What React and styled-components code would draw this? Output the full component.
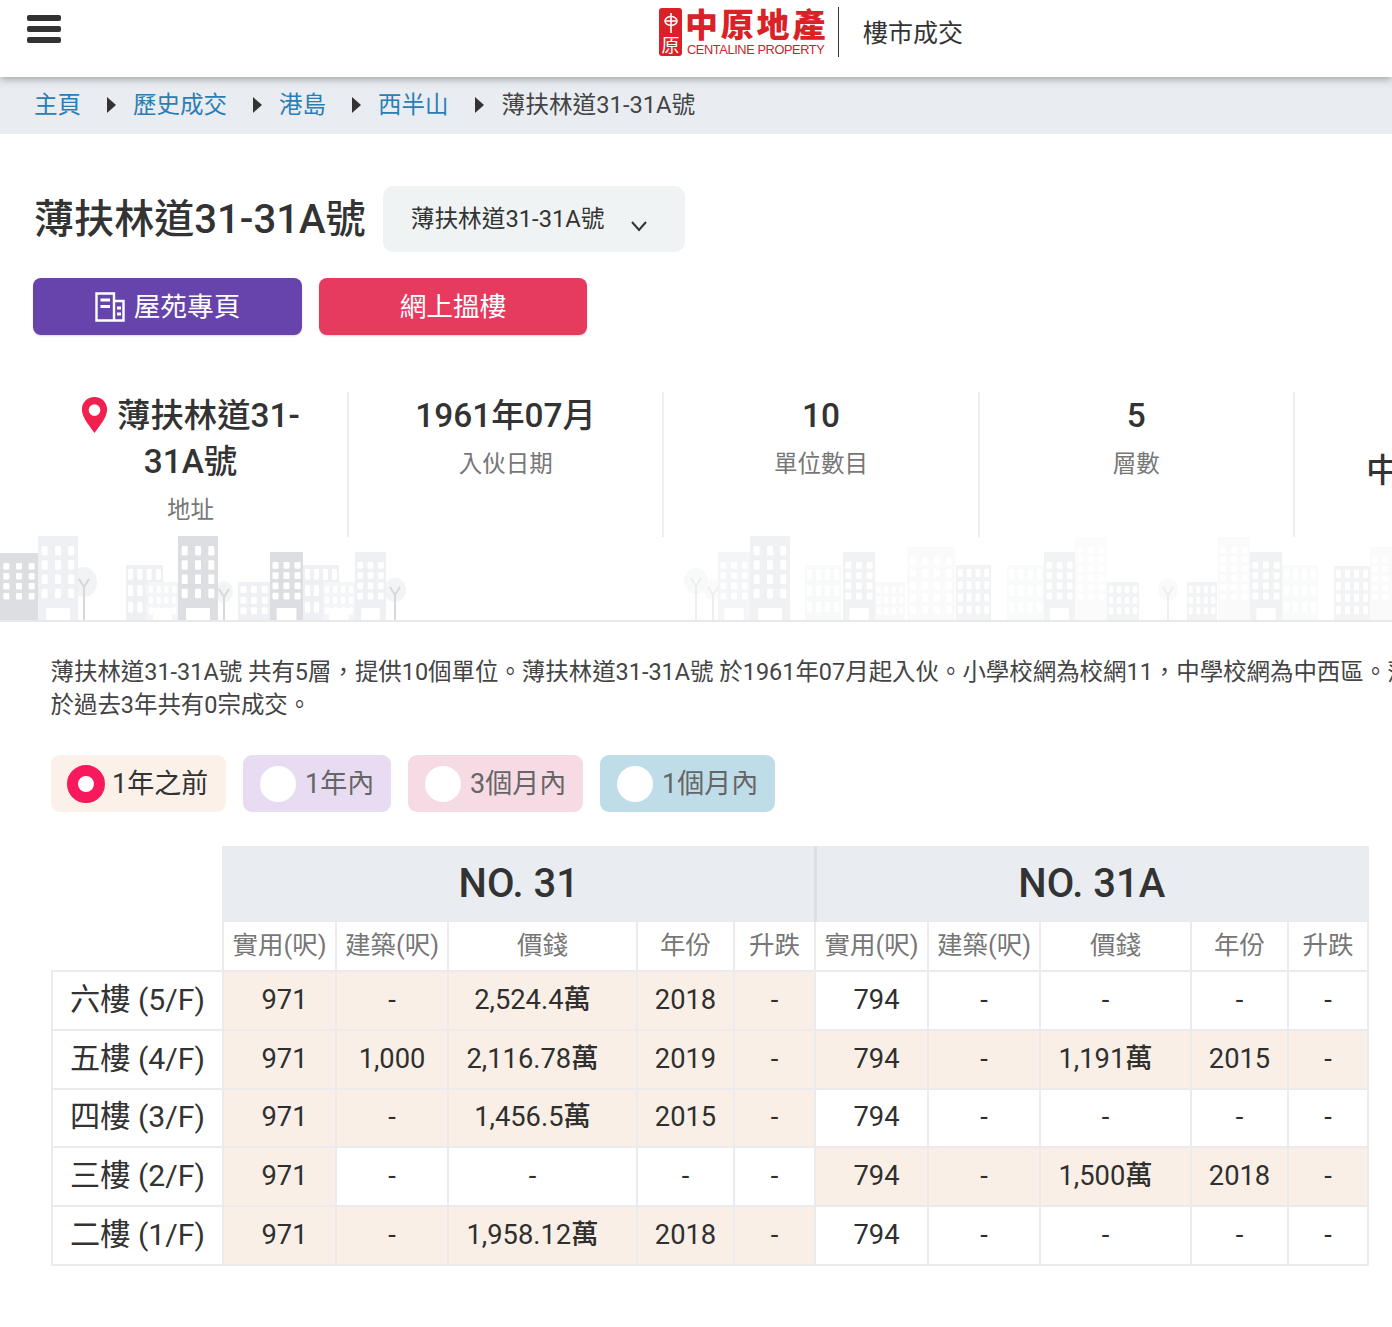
import React from "react"
import styled, { createGlobalStyle } from "styled-components"

const GlobalStyle = createGlobalStyle`
    html, body {
        margin: 0;
        padding: 0;
        background: #fff;
        overflow-x: hidden;
    }
    body {
        font-family: Roboto, "Noto Sans CJK TC", sans-serif;
        color: #333;
    }
`

const Page = styled.div`
    width: 1392px;
    height: 1327px;
    overflow: hidden;
    background: #fff;
`

const Header = styled.header`
    position: relative;
    z-index: 2;
    height: 77px;
    background: #fff;
    box-shadow: 0 2px 8px rgba(60, 60, 70, 0.45);
    display: flex;
    align-items: flex-start;
`

const Burger = styled.div`
    width: 34px;
    margin: 15px 0 0 27px;
    display: flex;
    flex-direction: column;
    gap: 5px;
    span {
        height: 6px;
        border-radius: 2px;
        background: #333;
    }
`

const LogoArea = styled.div`
    display: flex;
    margin: 7px 0 0 598px;
`

const Seal = styled.div`
    width: 23px;
    height: 48px;
    margin-top: 1px;
    border-radius: 3px;
    background: #da2128;
    color: #fff;
    display: flex;
    flex-direction: column;
    align-items: center;
    font-size: 18px;
    line-height: 20px;
    overflow: hidden;
    svg { margin: 5px 0 3px; }
`

const LogoText = styled.div`
    width: 139px;
    margin-left: 5px;
    display: flex;
    flex-direction: column;
`

const LogoCn = styled.div`
    margin: 2px 0 0 -2px;
    font-weight: 900;
    font-size: 33px;
    line-height: 33px;
    letter-spacing: 2.8px;
    color: #da2128;
    white-space: nowrap;
`

const LogoEn = styled.div`
    font-family: "Liberation Sans", sans-serif;
    font-size: 12.8px;
    line-height: 16px;
    letter-spacing: -0.4px;
    color: #c8242c;
    white-space: nowrap;
`

const LogoRule = styled.div`
    width: 1px;
    height: 50px;
    margin-left: 12px;
    background: #333;
`

const SiteName = styled.div`
    margin: 9px 0 0 24px;
    font-size: 25px;
    line-height: 36px;
    color: #333;
    white-space: nowrap;
`

const Crumbs = styled.nav`
    height: 57px;
    box-sizing: border-box;
    padding: 0 0 2px 34px;
    background: #e9edf2;
    display: flex;
    align-items: center;
    font-size: 23.5px;
    line-height: 30px;
    white-space: nowrap;
`

const Crumb = styled.span`
    color: ${props => (props.$current ? "#444" : "#2a7eb5")};
    font-size: ${props => (props.$current ? 23.7 : 23.5)}px;
    margin-left: ${props => (props.$current ? 1 : 0)}px;
`

const CrumbArrow = styled.i`
    width: 0;
    height: 0;
    margin: 0 17px 0 26px;
    border-left: 9.250px solid #333;
    border-top: 8px solid transparent;
    border-bottom: 8px solid transparent;
`

const TitleRow = styled.div`
    margin-top: 52px;
    padding-left: 34px;
    display: flex;
    align-items: center;
`

const Title = styled.h1`
    margin: 0;
    height: 66px;
    font-size: 40.1px;
    line-height: 68px;
    font-weight: 500;
    color: #333;
    white-space: nowrap;
`

const Select = styled.div`
    width: 302px;
    height: 66px;
    margin-left: 17px;
    padding: 0 37px 0 28px;
    box-sizing: border-box;
    border-radius: 10px;
    background: #f0f3f3;
    display: flex;
    align-items: center;
    justify-content: space-between;
    font-size: 23.7px;
    line-height: 30px;
    white-space: nowrap;
    svg { margin-top: 14px; }
`

const ButtonRow = styled.div`
    margin-top: 26px;
    padding-left: 33px;
    display: flex;
    gap: 17px;
`

const Button = styled.div`
    width: ${props => props.$width}px;
    height: 57px;
    border-radius: 8px;
    background: ${props => props.$bg};
    box-shadow: 0 1px 2px rgba(0, 0, 0, 0.15);
    color: #fff;
    display: flex;
    align-items: center;
    justify-content: center;
    gap: 9px;
    font-size: 26.7px;
    line-height: 34px;
`

const InfoRow = styled.div`
    margin-top: 57px;
    width: 1600px;
    display: flex;
    height: 145px;
`

const InfoCell = styled.div`
    flex: none;
    width: ${props => props.$width || 315.3}px;
    box-sizing: border-box;
    border-right: 2px solid #eceef0;
    display: flex;
    flex-direction: column;
    align-items: center;
    padding: 1px 0 0 ${props => props.$indent || 0}px;
    text-align: center;
    &:last-child { border-right: 0; }
`

const LastCell = styled(InfoCell)`
    align-items: flex-start;
    padding: 56px 0 0 71px;
`

const InfoValue = styled.div`
    font-size: 33.4px;
    line-height: 46px;
    font-weight: 500;
    color: #333;
    white-space: nowrap;
`

const InfoLabel = styled.div`
    margin-top: ${props => props.$top || 3}px;
    font-size: 23.5px;
    line-height: 44px;
    color: #777;
`

const Pin = styled.svg`
    margin: 0 9px -8px 0;
`

const Skyline = styled.svg`
    display: block;
    margin-top: -1px;
    border-bottom: 2px solid #e9e9ec;
`

const Summary = styled.p`
    margin: 34px 0 0;
    padding-left: 50.500px;
    font-size: 23.45px;
    line-height: 33px;
    color: #444;
    white-space: nowrap;
`

const Filters = styled.div`
    margin-top: 33px;
    padding-left: 51px;
    display: flex;
    gap: 17px;
`

const Filter = styled.div`
    width: ${props => props.$width}px;
    height: 57px;
    padding-left: ${props => (props.$on ? 16 : 17)}px;
    box-sizing: border-box;
    border-radius: 9px;
    background: ${props => props.$bg};
    color: ${props => (props.$on ? "#333" : "#666")};
    display: flex;
    align-items: center;
    gap: ${props => (props.$on ? 7 : 9)}px;
    font-size: 27px;
    line-height: 34px;
    white-space: nowrap;
`

const Radio = styled.span`
    flex: none;
    width: ${props => (props.$on ? 38 : 36)}px;
    height: ${props => (props.$on ? 38 : 36)}px;
    box-sizing: border-box;
    border-radius: 50%;
    background: #fff;
    border: ${props => (props.$on ? "11px solid #f7195b" : "0")};
`

const TableWrap = styled.div`
    margin: 34px 0 0 51px;
`

const Table = styled.table`
    width: 1318px;
    table-layout: fixed;
    border-collapse: collapse;
    color: #333;
    td, th {
        padding: 0;
        box-sizing: border-box;
        text-align: center;
        border: 2px solid #ebebed;
        white-space: nowrap;
        line-height: 36px;
    }
`

const BlockHead = styled.th`
    height: 74px;
    background: #e9edf2;
    font-size: 40px;
    font-weight: 500;
    &:nth-child(3) { border-left: 3px solid #dce0e5; }
`

const ColHead = styled.th`
    height: 50px;
    font-size: 25.5px;
    font-weight: 400;
    color: #777;
    && { padding-bottom: 2px; }
`

const Blank = styled.th`
    border: 0 !important;
    background: #fff;
`

const FloorCell = styled.td`
    font-size: 30.2px;
    font-weight: 400;
    && { padding-bottom: ${props => (props.$up ? 2 : 0)}px; }
`

const ValueCell = styled.td`
    height: 58.8px;
    font-size: 27.3px;
    font-weight: 450;
    color: #2f2f2f;
    background: ${props => (props.$hit ? "#f9efe6" : "#fff")};
    && {
        padding-left: ${props => (props.$col === 0 ? 10 : 0)}px;
        padding-right: ${props => (props.$col === 2 ? 20 : 0)}px;
        padding-bottom: ${props => (props.$up ? 2 : 0)}px;
    }
`

const widths = [171, 113, 112, 189, 97, 81, 113, 112, 151, 97, 80]

const rows = [
    ["六樓 (5/F)", ["971", "-", "2,524.4萬", "2018", "-"], ["794", "-", "-", "-", "-"]],
    ["五樓 (4/F)", ["971", "1,000", "2,116.78萬", "2019", "-"], ["794", "-", "1,191萬", "2015", "-"]],
    ["四樓 (3/F)", ["971", "-", "1,456.5萬", "2015", "-"], ["794", "-", "-", "-", "-"]],
    ["三樓 (2/F)", ["971", "-", "-", "-", "-"], ["794", "-", "1,500萬", "2018", "-"]],
    ["二樓 (1/F)", ["971", "-", "1,958.12萬", "2018", "-"], ["794", "-", "-", "-", "-"]],
]

const columns = ["實用(呎)", "建築(呎)", "價錢", "年份", "升跌"]

// x, top, width, windows across, windows down, fill, door
const buildings = [
    [38, 536, 40, 3, 4, "#eef0f3", 1],
    [0, 553, 38, 3, 4, "#dcdee2", 0],
    [126, 565, 37, 4, 3, "#eef0f3", 0],
    [147, 582, 31, 4, 3, "#f4f5f7", 1],
    [178, 536, 40, 3, 4, "#dcdee2", 1],
    [238, 582, 32, 3, 3, "#eef0f3", 0],
    [303, 565, 36, 4, 3, "#eef0f3", 0],
    [323, 582, 32, 4, 3, "#f4f5f7", 1],
    [270, 552, 33, 3, 4, "#dcdee2", 1],
    [355, 552, 31, 3, 4, "#eef0f3", 1],
    [718, 552, 32, 3, 4, "#f3f5f6", 1],
    [750, 536, 40, 3, 4, "#eff1f2", 1],
    [805, 565, 36, 4, 3, "#f8f9f9", 0],
    [843, 552, 32, 3, 4, "#f1f2f3", 1],
    [875, 582, 30, 4, 3, "#f9f9fa", 0],
    [907, 547, 48, 4, 5, "#fafafb", 0],
    [956, 565, 35, 4, 4, "#f2f3f4", 0],
    [1007, 565, 37, 4, 3, "#f9fafa", 0],
    [1044, 552, 31, 3, 4, "#f2f3f4", 1],
    [1075, 537, 32, 3, 6, "#fbfbfc", 0],
    [1107, 582, 32, 4, 3, "#f2f3f4", 0],
    [1187, 582, 30, 4, 3, "#f2f3f4", 0],
    [1218, 537, 32, 3, 6, "#fafafb", 0],
    [1250, 552, 32, 3, 4, "#f1f2f3", 1],
    [1282, 565, 36, 4, 3, "#f9fafa", 0],
    [1334, 566, 36, 4, 4, "#f2f3f4", 0],
    [1370, 547, 30, 3, 5, "#fafafb", 0],
]

// x, crown y, crown rx, crown ry, trunk colour, crown colour
const trees = [
    [84, 582, 13, 15, "#d6d8dc", "#f1f3f4"],
    [224, 592, 9, 11, "#d6d8dc", "#f3f4f6"],
    [395, 590, 11, 12, "#d6d8dc", "#f3f4f6"],
    [696, 581, 12, 13, "#eceeef", "#f8f9f9"],
    [713, 590, 9, 10, "#eceeef", "#fafafa"],
    [1168, 590, 10, 11, "#eceeef", "#fafafa"],
]

function Building({ spec }) {
    const [x, top, w, across, down, fill, door] = spec
    const bottom = 620
    const tall = top < 560
    const first = top + (tall ? 10 : 4)
    const limit = tall && across === 3 ? 603 : 618
    const pitch = (limit - first) / down
    const pitchX = w / across
    const winW = Math.min(pitchX * 0.55, 6)
    const wins = []
    for (let r = 0; r < down; r++) {
        for (let c = 0; c < across; c++) {
            wins.push(
                <rect
                    key={r + "-" + c}
                    x={x + pitchX * c + (pitchX - winW) / 2}
                    y={first + pitch * r}
                    width={winW}
                    height={pitch * 0.66}
                    rx="1"
                    fill="#fff"
                />
            )
        }
    }
    return (
        <g>
            <rect x={x} y={top} width={w} height={bottom - top} fill={fill} />
            {wins}
            {door ? <rect x={x + w * 0.2} y={608} width={w * 0.6} height={12} fill="#fff" /> : null}
        </g>
    )
}

function Tree({ spec }) {
    const [x, cy, rx, ry, trunk, crown] = spec
    const fork = cy + 5
    return (
        <g>
            <ellipse cx={x} cy={cy} rx={rx} ry={ry} fill={crown} />
            <path d={`M${x} 620V${fork}M${x} ${fork}l-5 -8M${x} ${fork}l5 -8`} stroke={trunk} strokeWidth="2" fill="none" />
        </g>
    )
}

function BuildingIcon() {
    return (
        <svg width="30" height="30" viewBox="0 0 30 30" fill="none" stroke="#fff" strokeWidth="2.400">
            <path d="M1.500 28.500V1.500h17.500v27zM19 9h9.500v19.500H1.500" />
            <path d="M5.500 8h9.500M5.500 14.500h9.500M22 16h4M22 22h4" strokeWidth="3.200" />
        </svg>
    )
}

function App() {
    return (
        <Page>
            <GlobalStyle />
            <Header>
                <Burger>
                    <span />
                    <span />
                    <span />
                </Burger>
                <LogoArea>
                    <Seal>
                        <svg width="14" height="20" viewBox="0 0 14 20" fill="none" stroke="#fff" strokeWidth="1.600">
                            <ellipse cx="7" cy="8" rx="6" ry="4.500" />
                            <path d="M2 8h10M7 0v20" />
                        </svg>
                        <span>原</span>
                    </Seal>
                    <LogoText>
                        <LogoCn>中原地產</LogoCn>
                        <LogoEn>CENTALINE PROPERTY</LogoEn>
                    </LogoText>
                    <LogoRule />
                    <SiteName>樓市成交</SiteName>
                </LogoArea>
            </Header>

            <Crumbs>
                <Crumb>主頁</Crumb>
                <CrumbArrow />
                <Crumb>歷史成交</Crumb>
                <CrumbArrow />
                <Crumb>港島</Crumb>
                <CrumbArrow />
                <Crumb>西半山</Crumb>
                <CrumbArrow />
                <Crumb $current>薄扶林道31-31A號</Crumb>
            </Crumbs>

            <TitleRow>
                <Title>薄扶林道31-31A號</Title>
                <Select>
                    <span>薄扶林道31-31A號</span>
                    <svg width="18" height="12" viewBox="0 0 18 12" fill="none" stroke="#333" strokeWidth="2">
                        <path d="M2 2l7 8 7-8" />
                    </svg>
                </Select>
            </TitleRow>

            <ButtonRow>
                <Button $bg="#6644ac" $width={269}>
                    <BuildingIcon />
                    屋苑專頁
                </Button>
                <Button $bg="#e63b5f" $width={268}>網上搵樓</Button>
            </ButtonRow>

            <InfoRow>
                <InfoCell $width={349} $indent={34}>
                    <InfoValue>
                        <Pin width="27" height="40" viewBox="0 0 30 42">
                            <path
                                fillRule="evenodd"
                                fill="#f0204f"
                                d="M15 1C7 1 1 7 1 15c0 9 9 19 14 26 5-7 14-17 14-26C29 7 23 1 15 1zm0 8a6.500 6.500 0 1 1 0 13 6.500 6.500 0 0 1 0-13z"
                            />
                        </Pin>
                        薄扶林道31-
                    </InfoValue>
                    <InfoValue>31A號</InfoValue>
                    <InfoLabel $top={3}>地址</InfoLabel>
                </InfoCell>
                <InfoCell>
                    <InfoValue>1961年07月</InfoValue>
                    <InfoLabel>入伙日期</InfoLabel>
                </InfoCell>
                <InfoCell>
                    <InfoValue>10</InfoValue>
                    <InfoLabel>單位數目</InfoLabel>
                </InfoCell>
                <InfoCell>
                    <InfoValue>5</InfoValue>
                    <InfoLabel>層數</InfoLabel>
                </InfoCell>
                <LastCell>
                    <InfoValue>中西區</InfoValue>
                </LastCell>
            </InfoRow>

            <Skyline width="1392" height="84" viewBox="0 536 1392 84">
                {trees.map(t => <Tree key={t[0]} spec={t} />)}
                {buildings.map(b => <Building key={b[0]} spec={b} />)}
            </Skyline>

            <Summary>
                薄扶林道31-31A號 共有5層，提供10個單位。薄扶林道31-31A號 於1961年07月起入伙。小學校網為校網11，中學校網為中西區。薄扶林道31-31A號
                <br />
                於過去3年共有0宗成交。
            </Summary>

            <Filters>
                <Filter $bg="#fbf1e9" $width={175} $on>
                    <Radio $on />
                    1年之前
                </Filter>
                <Filter $bg="#e7dcf2" $width={148}>
                    <Radio />
                    1年內
                </Filter>
                <Filter $bg="#f6dbe4" $width={175}>
                    <Radio />
                    3個月內
                </Filter>
                <Filter $bg="#bfdde8" $width={175}>
                    <Radio />
                    1個月內
                </Filter>
            </Filters>

            <TableWrap>
                <Table>
                    <colgroup>
                        {widths.map((w, i) => <col key={i} style={{ width: w }} />)}
                    </colgroup>
                    <thead>
                        <tr>
                            <Blank />
                            <BlockHead colSpan={5}>NO. 31</BlockHead>
                            <BlockHead colSpan={5}>NO. 31A</BlockHead>
                        </tr>
                        <tr>
                            <Blank />
                            {columns.map(c => <ColHead key={c}>{c}</ColHead>)}
                            {columns.map(c => <ColHead key={"a" + c}>{c}</ColHead>)}
                        </tr>
                    </thead>
                    <tbody>
                        {rows.map(([floor, left, right], r) => (
                            <tr key={floor}>
                                <FloorCell $up={r > 1}>{floor}</FloorCell>
                                {left.map((v, i) => <ValueCell key={i} $col={i} $up={r > 1} $hit={left[3] !== "-" || i === 0}>{v}</ValueCell>)}
                                {right.map((v, i) => <ValueCell key={i} $col={i} $up={r > 1} $hit={right[3] !== "-"}>{v}</ValueCell>)}
                            </tr>
                        ))}
                    </tbody>
                </Table>
            </TableWrap>
        </Page>
    )
}

export default App
